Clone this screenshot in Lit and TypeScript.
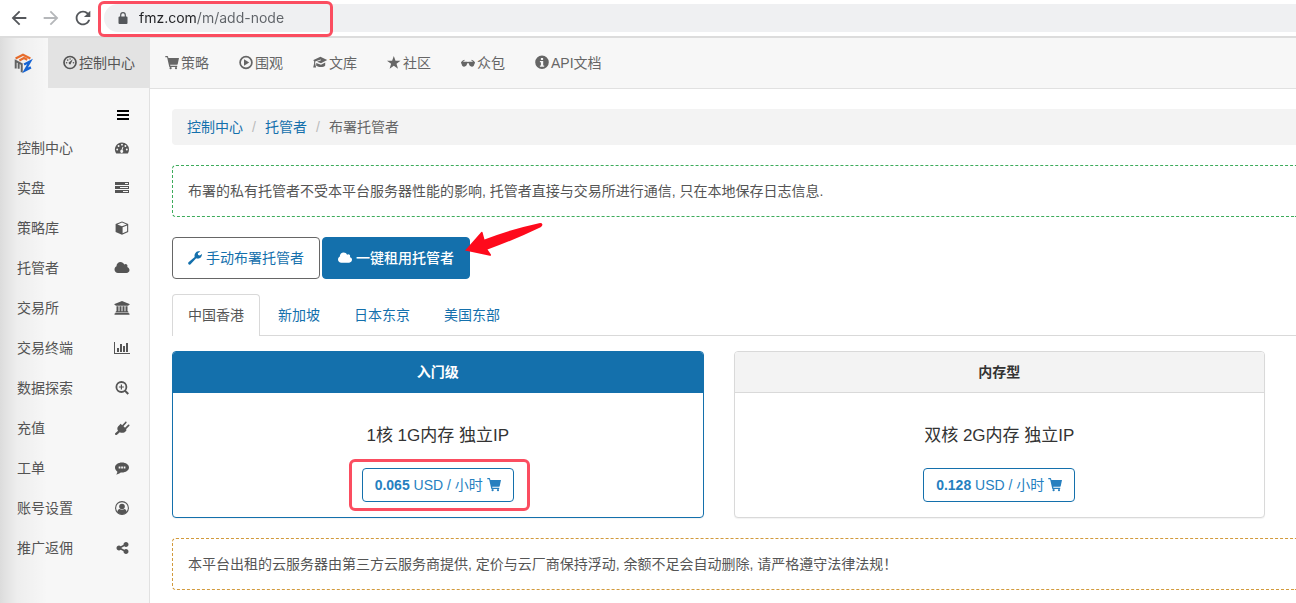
import { LitElement, html, css, svg, nothing, TemplateResult } from "lit";
import { customElement, property, state } from "lit/decorators.js";
import { classMap } from "lit/directives/class-map.js";

interface Glyph {
  box: string;
  art: TemplateResult;
}

const glyphs: Record<string, Glyph> = {
  back: {
    box: "0 0 24 24",
    art: svg`<path d="M20 11H7.83l5.59-5.59L12 4l-8 8 8 8 1.41-1.41L7.83 13H20v-2z"/>`,
  },
  forward: {
    box: "0 0 24 24",
    art: svg`<path d="M4 11h12.17l-5.59-5.59L12 4l8 8-8 8-1.41-1.41L16.17 13H4v-2z"/>`,
  },
  reload: {
    box: "0 0 24 24",
    art: svg`<path d="M17.65 6.35C16.2 4.9 14.21 4 12 4c-4.42 0-7.99 3.58-7.99 8s3.57 8 7.99 8c3.73 0 6.84-2.55 7.73-6h-2.08c-.82 2.33-3.04 4-5.65 4-3.31 0-6-2.69-6-6s2.69-6 6-6c1.66 0 3.14.69 4.22 1.78L13 11h7V4l-2.35 2.35z"/>`,
  },
  lock: {
    box: "0 0 12 12",
    art: svg`<path d="M2.5 4.5h7a1 1 0 0 1 1 1V11a1 1 0 0 1-1 1h-7a1 1 0 0 1-1-1V5.500a1 1 0 0 1 1-1z"/><path d="M3.700 5V3a2.300 2.300 0 0 1 4.600 0v2" fill="none" stroke="currentColor" stroke-width="1.200"/>`,
  },
  gauge: {
    box: "0 0 14 14",
    art: svg`<circle cx="7" cy="6.500" r="6" fill="none" stroke="currentColor" stroke-width="1.700"/><path d="M9.800 3.300 7.900 7.400a1.100 1.100 0 1 1-1.500-1.300z"/><circle cx="3.600" cy="6.800" r=".8"/><circle cx="4.700" cy="4.100" r=".8"/><circle cx="7.100" cy="3" r=".7"/><circle cx="10.500" cy="6.800" r=".8"/>`,
  },
  cart: {
    box: "0 0 14 14",
    art: svg`<path d="M.3 0h2.100c.3 0 .5.200.6.500L3.400 2H14l-1.300 6.200c-.1.300-.3.500-.6.500H5.200l.2 1h6.800v1.200H4.800a.6.600 0 0 1-.6-.5L2.100 1.300H.3z"/><circle cx="5.600" cy="12.200" r="1.100"/><circle cx="11" cy="12.200" r="1.100"/>`,
  },
  play: {
    box: "0 0 14 14",
    art: svg`<circle cx="7" cy="6.500" r="5.900" fill="none" stroke="currentColor" stroke-width="1.700"/><path d="M5 3.300v6.400l5.200-3.200z"/>`,
  },
  cap: {
    box: "0 0 14 14",
    art: svg`<path d="M7.400.8 14.200 4 8 7.300 4 5.800 8 4.300 7.700 3.600 2.200 5.500v2.100l.9 3.900H.2l.9-3.900V4.800L0 4.200z"/><path d="M3.200 6.900 8 8.700l4.200-2.200v3c-1.300 1.800-6.100 2.200-9 .3z"/>`,
  },
  star: {
    box: "0 0 14 14",
    art: svg`<path d="m6.800 0 1.700 4.700h5L9.500 7.700l1.500 5L6.800 9.700l-4.200 3 1.500-5L0 4.700h5.100z"/>`,
  },
  glasses: {
    box: "0 0 14 14",
    art: svg`<path d="M0 6.500C.8 5.100 2 4.200 3.300 3.700l.4.700c-.9.400-1.500.9-1.900 1.400h3.600c.6 0 1 .2 1.600.2s1-.2 1.600-.2h3.600c-.4-.5-1-1-1.900-1.400l.4-.7C12 4.200 13.200 5.100 14 6.500v.9h-.6c0 1.900-.9 3.300-2.500 3.300-1.800 0-2.800-1.300-3-3.100-.3-.4-1.500-.4-1.800 0-.2 1.800-1.200 3.100-3 3.100-1.600 0-2.500-1.400-2.500-3.300H0z"/>`,
  },
  info: {
    box: "0 0 14 14",
    art: svg`<path fill-rule="evenodd" d="M7-.5a6.800 6.800 0 1 1 0 13.600A6.800 6.800 0 0 1 7-.5zM5.900 1.900v2h2.200v-2zM4.900 5.100v1.200h1v3.200h-1v1.300h4.300V9.500h-1V5.100z"/>`,
  },
  menu: {
    box: "0 0 14 14",
    art: svg`<path d="M1 2h12v2H1zM1 6h12v2H1zM1 10h12v2H1z"/>`,
  },
  dashboard: {
    box: "0 0 14 14",
    art: svg`<path fill-rule="evenodd" d="M7 1.500a7 7 0 0 1 7 7c0 1.400-.4 2.600-1 3.700a.7.700 0 0 1-.6.300H1.600a.7.700 0 0 1-.6-.3 7 7 0 0 1 6-10.700zM7 2.700a.9.900 0 1 0 0 1.900.9.900 0 0 0 0-1.900zM3.600 4.100a.9.900 0 1 0 0 1.900.9.900 0 0 0 0-1.900zm6.800 0a.9.900 0 1 0 0 1.900.9.900 0 0 0 0-1.900zM2.200 7.600a.9.900 0 1 0 0 1.900.9.900 0 0 0 0-1.900zm9.600 0a.9.900 0 1 0 0 1.900.9.900 0 0 0 0-1.900zM7.600 5.700 6.500 8.800a1.500 1.500 0 1 0 1 .2l.9-3z"/>`,
  },
  tasks: {
    box: "0 0 14 14",
    art: svg`<path fill-rule="evenodd" d="M0 1h14v3H0zM10 2v1h3V2zM0 5h14v3H0zM5 6v1h8V6zM0 9h14v3H0zM8 10v1h5v-1z"/>`,
  },
  cube: {
    box: "0 0 14 14",
    art: svg`<path fill-rule="evenodd" d="M7 .4 13.200 2.900v8L7 13.800.6 10.900v-8zM7 1.600 2.400 3.400 7 5.200l4.700-1.800zM7.600 6.300v6l4.500-2.100V4.500z"/>`,
  },
  cloud: {
    box: "0 0 1920 1792",
    art: svg`<path d="M1920 1152q0 159-112.500 271.500T1536 1536H448q-185 0-316.500-131.500T0 1088q0-132 71-241.500T258 683q-2-28-2-43 0-212 150-362t362-150q158 0 286.500 88T1242 446q70-62 166-62 106 0 181 75t75 181q0 75-41 138 129 30 213 134.500t84 239.500z"/>`,
  },
  bank: {
    box: "0 0 15 14",
    art: svg`<path d="M7.500 0 15 3v1h-1v.7H1V4H0V3zM2 5.200h2v5h1v-5h2v5h1v-5h2v5h1v-5h2v5h.7v1H1.300v-1H2zM.7 11.700h13.600v.7h.7v1.300H0v-1.300h.7z"/>`,
  },
  chart: {
    box: "0 0 16 14",
    art: svg`<path d="M0 1h1v11h15v1H0zM3 7h2v4H3zM6 3h2v8H6zM9 5h2v6H9zM12 2h2v9h-2z"/>`,
  },
  zoomIn: {
    box: "0 0 14 14",
    art: svg`<circle cx="6.400" cy="6" r="5" fill="none" stroke="currentColor" stroke-width="1.800"/><path d="M5.800 3.500H7v1.900h1.900v1.200H7v1.900H5.800V6.600H3.900V5.400h1.900zM9.200 10.300l1.400-1.400 3.400 3.300-1.500 1.500z"/>`,
  },
  plug: {
    box: "0 0 14 14",
    art: svg`<path d="M4.300 4.200 5.700 2.800l1.400 1.400L10.200.9c1-.8 2 .3 1.200 1.200L8.500 5.300l1.500 1.500 3.100-3c1-.7 2 .3 1.100 1.300L11 8.200l.6.700c-1.300 2.600-4.400 3.700-6.800 2.300L1.700 14 .1 13.700 0 12.500l3-2.800C1.700 7.900 2.300 5.600 4.300 4.200z"/>`,
  },
  comment: {
    box: "0 0 14 14",
    art: svg`<path fill-rule="evenodd" d="M7 1.500c3.900 0 7 2.200 7 5s-3.100 5-7 5l-1.300-.1C4.500 12.500 3 13.200 1.100 13.400c.8-.8 1.200-1.600 1.300-2.700C.9 9.700 0 8.200 0 6.500c0-2.800 3.100-5 7-5zM3.700 5.500v1.900h1.700V5.500zm2.500 0v1.900h1.700V5.500zm2.500 0v1.900h1.700V5.500z"/>`,
  },
  user: {
    box: "0 0 14 14",
    art: svg`<circle cx="7" cy="7" r="6.400" fill="none" stroke="currentColor" stroke-width="1.100"/><circle cx="7" cy="5.500" r="2.800"/><path d="M2.200 11C2.700 9 3.600 8.100 4.600 8c1.400 1.100 3.400 1.100 4.800 0 1 .1 1.900 1 2.400 3-2.300 3-7.300 3-9.600 0z"/>`,
  },
  share: {
    box: "0 0 1664 1792",
    art: svg`<path d="M1344 1024q133 0 226.500 93.500T1664 1344t-93.500 226.500T1344 1664t-226.500-93.500T1024 1344q0-12 2-34l-360-180q-92 86-218 86-133 0-226.500-93.500T128 896t93.500-226.500T448 576q126 0 218 86l360-180q-2-22-2-34 0-133 93.500-226.500T1344 128t226.500 93.500T1664 448t-93.500 226.500T1344 768q-126 0-218-86L766 862q2 22 2 34t-2 34l360 180q92-86 218-86z"/>`,
  },
  wrench: {
    box: "0 0 14 14",
    art: svg`<path d="M.5 11.300 6.700 6C6 3.600 7.300.9 10.200.3c.8-.2 1.500-.1 2.100.1L9.800 2.300l.3 1.800 1.800.5 2-1.700c.4 2.700-1.700 5-4.600 4.700-.4 0-.8-.1-1.100-.3l-5.900 6.100c-1.200 1-2.900-.8-1.800-2.100z"/>`,
  },
  logo: {
    box: "0 0 20 22",
    art: svg`<path fill="none" stroke="#ee6f2d" stroke-width="2.400" d="M1.800 6 10 1.900 18.200 6M6 8.200l5-2.700 3.700 1.900"/><path fill="none" stroke="#1565d8" stroke-width="2.600" d="M11.200 12.600 17.800 9.300l-5.600 9.900 6.600-3.300"/><path fill="none" stroke="#666" stroke-width="2.200" d="M1.900 17V8.600l6.700 3.700v8.900M5.200 10.800v6.500"/>`,
  },
};

@customElement("ui-glyph")
export class UiGlyph extends LitElement {
  static styles = css`
    :host {
      display: inline-flex;
      flex: none;
      width: 14px;
      height: 14px;
    }
    .art {
      display: block;
      width: 100%;
      height: 100%;
      overflow: visible;
      fill: currentColor;
    }
  `;

  @property() name = "";

  render() {
    const glyph = glyphs[this.name];
    return glyph
      ? html`<svg class="art" viewBox=${glyph.box} aria-hidden="true">${glyph.art}</svg>`
      : nothing;
  }
}

@customElement("browser-bar")
export class BrowserBar extends LitElement {
  static styles = css`
    :host {
      display: flex;
      align-items: center;
      gap: 10px;
      height: 36px;
      padding-left: 8px;
      background: #fff;
      border-bottom: 2px solid #dcdcdc;
      color: #54575b;
    }
    .key {
      display: flex;
      padding: 0;
      border: 0;
      background: none;
      color: inherit;
    }
    .key:disabled {
      color: #b5b7ba;
    }
    .key ui-glyph {
      width: 22px;
      height: 22px;
    }
    .address {
      position: relative;
      display: flex;
      flex: 1;
      align-items: center;
      gap: 10px;
      height: 28px;
      padding-left: 13px;
      border-radius: 14px 0 0 14px;
      background: #eff0f2;
    }
    .address ui-glyph {
      width: 12px;
      height: 12px;
    }
    .url {
      flex: 1;
      min-width: 0;
      height: 24px;
      padding: 0;
      border: 0;
      outline: 0;
      font: 14px/24px Inter, sans-serif;
      color: transparent;
      background: linear-gradient(90deg, #202124 57px, #5f6368 57px);
      -webkit-background-clip: text;
      background-clip: text;
    }
    .mark {
      position: absolute;
      top: -3px;
      left: -6px;
      box-sizing: border-box;
      width: 235px;
      height: 36px;
      border: 3px solid #fb4d60;
      border-radius: 6px;
      pointer-events: none;
    }
  `;

  render() {
    return html`
      <button class="key" aria-label="后退"><ui-glyph name="back"></ui-glyph></button>
      <button class="key" aria-label="前进" disabled><ui-glyph name="forward"></ui-glyph></button>
      <button class="key" aria-label="刷新"><ui-glyph name="reload"></ui-glyph></button>
      <div class="address">
        <ui-glyph name="lock"></ui-glyph>
        <input class="url" type="text" aria-label="地址" .value=${"fmz.com/m/add-node"} />
        <span class="mark"></span>
      </div>
    `;
  }
}

@customElement("top-nav")
export class TopNav extends LitElement {
  static styles = css`
    :host {
      display: flex;
      height: 50px;
      background: #f7f7f7;
      border-bottom: 1px solid #e1e1e1;
      line-height: 20px;
    }
    .brand {
      display: flex;
      align-items: center;
      justify-content: center;
      width: 46px;
      padding-right: 2px;
    }
    .brand ui-glyph {
      width: 18px;
      height: 20px;
    }
    .item {
      display: flex;
      align-items: center;
      gap: 2px;
      padding: 0 15px;
      color: #666;
      text-decoration: none;
      white-space: nowrap;
    }
    .item.active {
      background: #e3e3e3;
      color: #555;
    }
  `;

  private items = [
    ["gauge", "控制中心"],
    ["cart", "策略"],
    ["play", "围观"],
    ["cap", "文库"],
    ["star", "社区"],
    ["glasses", "众包"],
    ["info", "API文档"],
  ];

  render() {
    return html`
      <a class="brand" href="#" aria-label="FMZ"><ui-glyph name="logo"></ui-glyph></a>
      ${this.items.map(
        ([icon, label], i) => html`
          <a class=${classMap({ item: true, active: i === 0 })} href="#"
            ><ui-glyph name=${icon}></ui-glyph><span>${label}</span></a
          >
        `
      )}
    `;
  }
}

@customElement("side-menu")
export class SideMenu extends LitElement {
  static styles = css`
    :host {
      display: block;
      box-sizing: border-box;
      flex: none;
      width: 150px;
      margin-top: -1px;
      border-right: 1px solid #e1e1e1;
      background: #f7f7f7;
    }
    .toggle {
      display: flex;
      justify-content: flex-end;
      width: 100%;
      padding: 20px 19px 6px;
      border: 0;
      background: none;
      color: #000;
    }
    .item {
      display: flex;
      align-items: center;
      justify-content: space-between;
      height: 40px;
      padding: 0 19px 0 17px;
      color: #555;
      text-decoration: none;
    }
    .icon {
      display: flex;
      justify-content: center;
      width: 16px;
    }
    .icon ui-glyph {
      width: 16px;
    }
  `;

  private items = [
    ["控制中心", "dashboard"],
    ["实盘", "tasks"],
    ["策略库", "cube"],
    ["托管者", "cloud"],
    ["交易所", "bank"],
    ["交易终端", "chart"],
    ["数据探索", "zoomIn"],
    ["充值", "plug"],
    ["工单", "comment"],
    ["账号设置", "user"],
    ["推广返佣", "share"],
  ];

  render() {
    return html`
      <button class="toggle" aria-label="菜单"><ui-glyph name="menu"></ui-glyph></button>
      ${this.items.map(
        ([label, icon]) => html`
          <a class="item" href="#"
            ><span>${label}</span><span class="icon"><ui-glyph name=${icon}></ui-glyph></span
          ></a>
        `
      )}
    `;
  }
}

@customElement("plan-card")
export class PlanCard extends LitElement {
  static styles = css`
    :host {
      display: block;
      border: 1px solid #d9d9d9;
      border-radius: 4px;
      overflow: hidden;
      text-align: center;
      background: #fff;
      box-shadow: 0 1px 1px rgba(0, 0, 0, 0.05);
    }
    :host([featured]) {
      border-color: #1470ac;
    }
    .head {
      margin: 0;
      padding: 10px 15px;
      border-bottom: 1px solid #d9d9d9;
      background: #f3f3f3;
      color: #333;
      font-size: 14px;
      line-height: 20px;
      font-weight: 700;
    }
    :host([featured]) .head {
      border-color: #1470ac;
      background: #1470ac;
      color: #fff;
    }
    .body {
      display: flex;
      flex-direction: column;
      align-items: center;
      gap: 17px;
      padding: 28px 15px 15px;
    }
    .spec {
      margin: 0;
      color: #333;
      font-size: 17px;
      line-height: 30px;
    }
    .offer {
      position: relative;
    }
    .price {
      display: flex;
      align-items: center;
      gap: 4px;
      padding: 6px 12px;
      border: 1px solid #1470ac;
      border-radius: 4px;
      background: #fff;
      color: #267fbf;
      font: inherit;
      line-height: 20px;
    }
    .mark {
      position: absolute;
      inset: -9px -16px -9px -13px;
      border: 3px solid #fb4d60;
      border-radius: 6px;
      pointer-events: none;
    }
  `;

  @property() heading = "";
  @property() spec = "";
  @property() price = "";
  @property({ type: Boolean, reflect: true }) featured = false;

  render() {
    return html`
      <h3 class="head">${this.heading}</h3>
      <div class="body">
        <p class="spec">${this.spec}</p>
        <div class="offer">
          <button class="price">
            <span><b>${this.price}</b> USD / 小时</span><ui-glyph name="cart"></ui-glyph>
          </button>
          ${this.featured ? html`<span class="mark"></span>` : nothing}
        </div>
      </div>
    `;
  }
}

@customElement("app-root")
export class AppRoot extends LitElement {
  static styles = css`
    :host {
      display: flex;
      flex-direction: column;
      min-height: 100vh;
      font: 14px/20px "Liberation Sans", "Noto Sans CJK SC", sans-serif;
      color: #555;
      background: #fff;
    }
    .site {
      position: relative;
      display: flex;
      flex: 1;
      flex-direction: column;
    }
    .shade {
      position: absolute;
      inset: 0 auto 0 0;
      width: 48px;
      background: linear-gradient(
        90deg,
        rgba(0, 0, 0, 0.11),
        rgba(0, 0, 0, 0.04) 35%,
        rgba(0, 0, 0, 0)
      );
      pointer-events: none;
    }
    .columns {
      display: flex;
      flex: 1;
    }
    .main {
      flex: 1;
      min-width: 0;
      padding: 20px 0 13px 22px;
    }
    .crumbs {
      display: flex;
      margin: 0 0 20px;
      padding: 8px 15px;
      border-radius: 4px 0 0 4px;
      background: #f3f3f3;
      color: #666;
      list-style: none;
    }
    .crumbs a {
      color: #1470ac;
      text-decoration: none;
    }
    .slash {
      display: inline-block;
      width: 22px;
      text-align: center;
      color: #bbb;
    }
    .note {
      margin: 0 0 20px;
      padding: 15px;
      border: 1px dashed #3dab5b;
      border-right: 0;
      border-radius: 4px 0 0 4px;
    }
    .note.warn {
      margin: 20px 0 0;
      border-color: #d29a3c;
    }
    .modes {
      display: flex;
      gap: 2px;
      margin-bottom: 15px;
    }
    .mode {
      position: relative;
      display: flex;
      align-items: center;
      gap: 4px;
      padding: 10px 15px;
      border: 1px solid #666;
      border-radius: 4px;
      background: #fff;
      color: #1470ac;
      font: inherit;
    }
    .mode.active {
      border-color: #1470ac;
      background: #1470ac;
      color: #fff;
      font-weight: 500;
    }
    .arrow {
      position: absolute;
      left: 139px;
      top: -18px;
      width: 84px;
      height: 40px;
      fill: #fe0a1c;
      pointer-events: none;
    }
    .tabs {
      display: flex;
      gap: 2px;
      margin-bottom: 15px;
      box-shadow: inset 0 -1px #d9d9d9;
    }
    .tab {
      padding: 10px 15px 11px;
      border: 1px solid transparent;
      border-bottom: 0;
      border-radius: 4px 4px 0 0;
      background: none;
      color: #1470ac;
      font: inherit;
    }
    .tab.active {
      border-color: #d9d9d9;
      background: #fff;
      color: #555;
    }
    .plans {
      display: grid;
      grid-template-columns: 1fr 1fr;
      gap: 30px;
      padding-right: 31px;
    }
  `;

  @state() private region = 0;

  private regions = ["中国香港", "新加坡", "日本东京", "美国东部"];

  render() {
    return html`
      <browser-bar></browser-bar>
      <div class="site">
        <top-nav></top-nav>
        <div class="columns">
          <side-menu></side-menu>
          <main class="main">
            <ol class="crumbs">
              <li><a href="#">控制中心</a></li>
              <li><span class="slash">/</span><a href="#">托管者</a></li>
              <li><span class="slash">/</span>布署托管者</li>
            </ol>
            <p class="note">
              布署的私有托管者不受本平台服务器性能的影响, 托管者直接与交易所进行通信, 只在本地保存日志信息.
            </p>
            <div class="modes">
              <button class="mode">
                <ui-glyph name="wrench"></ui-glyph><span>手动布署托管者</span>
              </button>
              <button class="mode active">
                <ui-glyph name="cloud"></ui-glyph><span>一键租用托管者</span>
                <svg class="arrow" viewBox="0 0 84 40" aria-hidden="true">
                  <path
                    d="M3 30.500 19.300 12q1-.8 1.300.5l1.900 7Q50 9 77 3.200q3-.5 3.400 1.300.2 1.700-1.800 2.700Q52 20 25.500 29.500l3.300 4.800q.8 1.700-1 1.500z"
                  />
                </svg>
              </button>
            </div>
            <div class="tabs" role="tablist">
              ${this.regions.map(
                (name, i) => html`
                  <button
                    class=${classMap({ tab: true, active: i === this.region })}
                    role="tab"
                    aria-selected=${i === this.region ? "true" : "false"}
                    @click=${() => (this.region = i)}
                  >
                    ${name}
                  </button>
                `
              )}
            </div>
            <div class="plans">
              <plan-card featured heading="入门级" spec="1核 1G内存 独立IP" price="0.065"></plan-card>
              <plan-card heading="内存型" spec="双核 2G内存 独立IP" price="0.128"></plan-card>
            </div>
            <p class="note warn">
              本平台出租的云服务器由第三方云服务商提供, 定价与云厂商保持浮动, 余额不足会自动删除, 请严格遵守法律法规！
            </p>
          </main>
        </div>
        <div class="shade"></div>
      </div>
    `;
  }
}
